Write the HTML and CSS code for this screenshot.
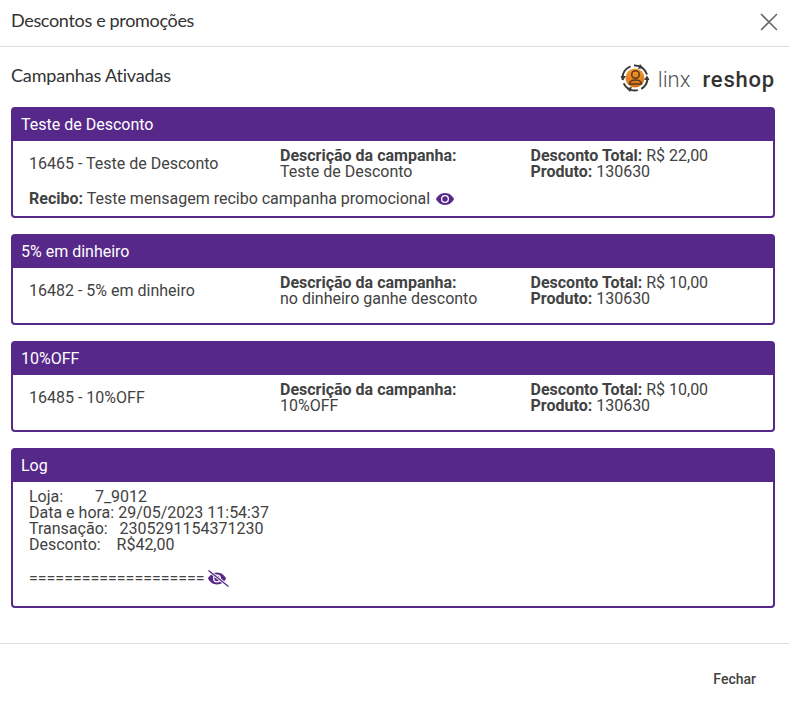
FILE: index.html
```html
<!DOCTYPE html>
<html lang="pt-BR">
<head>
    <meta charset="UTF-8">
    <meta name="viewport" content="width=device-width, initial-scale=1.0">
    <title>Descontos e promoções</title>
    <link rel="stylesheet" href="styles.css">
</head>
<body>
    <div class="modal">
        <div class="modal-header">
            <h1>Descontos e promoções</h1>
            <svg class="close-icon" width="18" height="18" viewBox="0 0 18 18">
                <path d="M1 1 L17 17 M17 1 L1 17" fill="none" stroke="#6b6b6b" stroke-width="1.6"/>
            </svg>
        </div>

        <div class="modal-body">
            <div class="title-row">
                <h2>Campanhas Ativadas</h2>
                <div class="logo">
                    <svg class="logo-mark" width="30" height="28" viewBox="0 0 30 28">
                        <defs>
                            <linearGradient id="logoDisk" x1="0" y1="0" x2="0" y2="1">
                                <stop offset="0" stop-color="#f39a2b"/>
                                <stop offset="1" stop-color="#d9701a"/>
                            </linearGradient>
                        </defs>
                        <circle cx="15" cy="14" r="12.500" fill="none" stroke="#3b3b3b" stroke-width="2" stroke-dasharray="17 3.500" stroke-dashoffset="4"/>
                        <path d="M0.500 12 L6 12 L3 16.500 Z M29.500 16 L24 16 L27 11.500 Z M20 0 L23.500 4 L18 5 Z M10 28 L6.500 24 L12 23 Z" fill="#3b3b3b"/>
                        <circle cx="15" cy="14" r="9.500" fill="url(#logoDisk)"/>
                        <circle cx="15.500" cy="10.500" r="3.800" fill="none" stroke="#5a3a20" stroke-width="1.500"/>
                        <path d="M9.500 20 C9.500 14.500 21.500 14.500 21.500 20 Z" fill="none" stroke="#5a3a20" stroke-width="1.500"/>
                    </svg>
                    <span class="logo-linx">linx</span>
                    <span class="logo-reshop">reshop</span>
                </div>
            </div>

            <div class="card">
                <div class="card-header">Teste de Desconto</div>
                <div class="card-body">
                    <div class="campaign">
                        <div class="campaign-name">16465 - Teste de Desconto</div>
                        <div><b>Descrição da campanha:</b><br>Teste de Desconto</div>
                        <div><b>Desconto Total:</b> R$ 22,00<br><b>Produto:</b> 130630</div>
                    </div>
                    <div class="receipt">
                        <span><b>Recibo:</b> Teste mensagem recibo campanha promocional</span>
                        <svg width="18" height="12" viewBox="0 0 18 12">
                            <path d="M9 0 C4.800 0 1.500 2.800 0 6 C1.500 9.200 4.800 12 9 12 C13.200 12 16.500 9.200 18 6 C16.500 2.800 13.200 0 9 0 Z" fill="#56288a"/>
                            <circle cx="9" cy="6" r="4" fill="#fff"/>
                            <circle cx="9" cy="6" r="2.700" fill="#56288a"/>
                        </svg>
                    </div>
                </div>
            </div>

            <div class="card">
                <div class="card-header">5% em dinheiro</div>
                <div class="card-body">
                    <div class="campaign">
                        <div class="campaign-name">16482 - 5% em dinheiro</div>
                        <div><b>Descrição da campanha:</b><br>no dinheiro ganhe desconto</div>
                        <div><b>Desconto Total:</b> R$ 10,00<br><b>Produto:</b> 130630</div>
                    </div>
                </div>
            </div>

            <div class="card">
                <div class="card-header">10%OFF</div>
                <div class="card-body">
                    <div class="campaign">
                        <div class="campaign-name">16485 - 10%OFF</div>
                        <div><b>Descrição da campanha:</b><br>10%OFF</div>
                        <div><b>Desconto Total:</b> R$ 10,00<br><b>Produto:</b> 130630</div>
                    </div>
                </div>
            </div>

            <div class="card">
                <div class="card-header">Log</div>
                <div class="log-body">
                    <pre class="log-text">Loja:        7_9012
Data e hora: 29/05/2023 11:54:37
Transação:   2305291154371230
Desconto:    R$42,00</pre>
                    <div class="log-sep">
                        <span>====================</span>
                        <svg width="21" height="17" viewBox="0 0 21 17">
                            <path d="M9 2.500 C4.800 2.500 1.500 5.300 0 8.500 C1.500 11.700 4.800 14.500 9 14.500 C13.200 14.500 16.500 11.700 18 8.500 C16.500 5.300 13.200 2.500 9 2.500 Z" fill="#56288a"/>
                            <circle cx="9" cy="8.500" r="4" fill="#fff"/>
                            <circle cx="9" cy="8.500" r="2.700" fill="#56288a"/>
                            <path d="M0.500 0.500 L20.500 16.500" stroke="#fff" stroke-width="3"/>
                            <path d="M0.500 0.500 L20.500 16.500" stroke="#56288a" stroke-width="1.300"/>
                        </svg>
                    </div>
                </div>
            </div>
        </div>

        <div class="modal-footer">
            <button class="btn-close">Fechar</button>
        </div>
    </div>
</body>
</html>
```

FILE: styles.css
```css
* {
    margin: 0;
    padding: 0;
    box-sizing: border-box;
}

body {
    background-color: #fff;
    color: #424242;
    font-family: Roboto, sans-serif;
    font-size: 16px;
    line-height: 16px;
}

.modal-header {
    display: flex;
    justify-content: space-between;
    align-items: center;
    height: 47px;
    padding: 0 11px 3px 11px;
    border-bottom: 1px solid #dedede;
}

h1, h2 {
    font-family: Lato, sans-serif;
    font-size: 18px;
    font-weight: 400;
    color: #333;
}

h1 {
    margin-top: -4px;
    letter-spacing: -0.33px;
}

h2 {
    margin-top: -4px;
    letter-spacing: -0.17px;
}

.modal-body {
    padding: 0 14px 0 11px;
}

.title-row {
    display: flex;
    justify-content: space-between;
    align-items: center;
    height: 60px;
}

.logo {
    display: flex;
    align-items: center;
    font-size: 22px;
    margin-top: 2px;
}

.logo-mark {
    margin-right: 8px;
}

.logo-linx {
    margin-top: 4px;
    margin-right: 12px;
    font-weight: 300;
    color: #555;
}

.logo-reshop {
    margin-top: 4px;
    font-weight: 500;
    letter-spacing: 0.8px;
    color: #333;
}

.card {
    margin-bottom: 16px;
    border: 2px solid #56288a;
    border-radius: 4px;
}

.card-header {
    height: 32px;
    padding: 0 8px;
    background-color: #56288a;
    color: #fff;
    line-height: 32px;
}

.card-body {
    padding: 7px 0 9px 16px;
}

.campaign {
    display: grid;
    grid-template-columns: 251px 250.5px 1fr;
    align-items: center;
    min-height: 32px;
    margin-bottom: 7px;
}

.receipt {
    display: flex;
    align-items: center;
    gap: 6px;
    margin-top: 11px;
}

.log-body {
    padding: 7px 16px 19px;
}

.log-text {
    font-family: Roboto, sans-serif;
}

.log-sep {
    display: flex;
    align-items: center;
    gap: 3px;
    margin-top: 17px;
}

.modal-footer {
    display: flex;
    justify-content: flex-end;
    margin-top: 35px;
    padding: 23px 33px 0 0;
    border-top: 1px solid #dedede;
}

.btn-close {
    padding: 4px 0;
    background: none;
    border: none;
    color: #424242;
    font-family: Roboto, sans-serif;
    font-size: 14px;
    font-weight: 500;
    cursor: pointer;
}
```
